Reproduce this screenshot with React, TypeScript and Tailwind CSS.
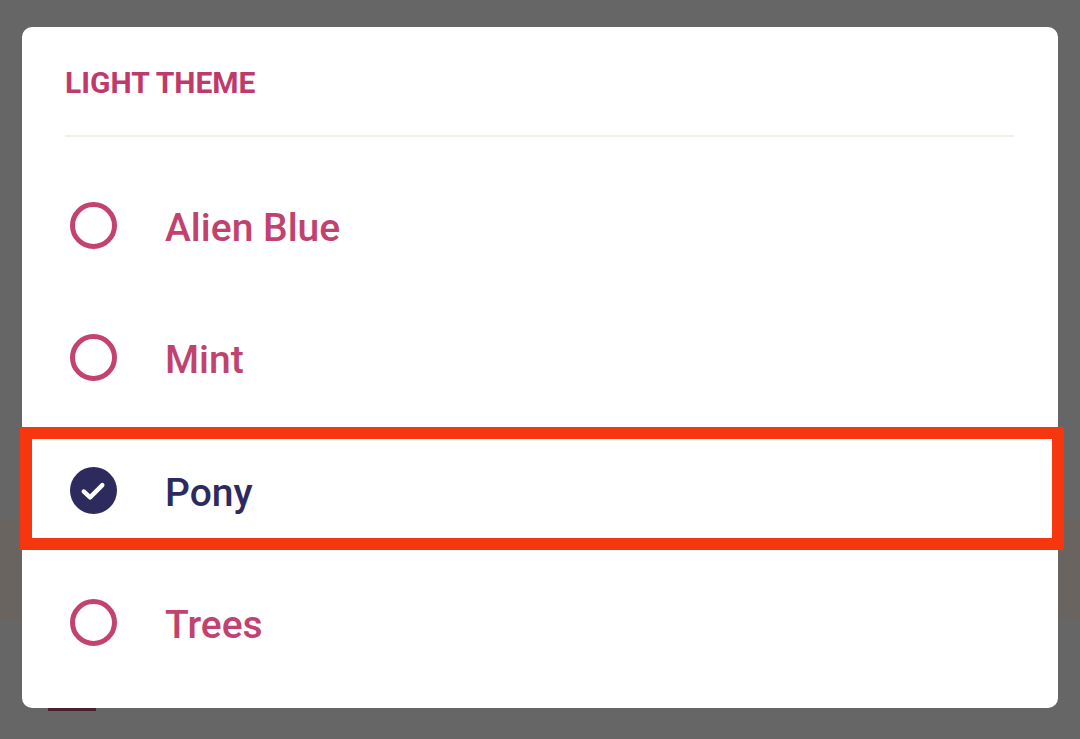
import React from "react";

const items = [
  { label: "Alien Blue", checked: false },
  { label: "Mint", checked: false },
  { label: "Pony", checked: true },
  { label: "Trees", checked: false },
];

function Radio({ checked }: { checked: boolean }) {
  if (checked) {
    return (
      <svg width="47" height="47" viewBox="0 0 48 48" className="shrink-0">
        <circle cx="24" cy="24" r="24" fill="#2d2b5e" />
        <path
          d="M14 25 L20.5 31 L33 18.5"
          fill="none"
          stroke="#ffffff"
          strokeWidth="4.5"
          strokeLinecap="round"
          strokeLinejoin="round"
        />
      </svg>
    );
  }
  return <div className="w-[47px] h-[47px] shrink-0 rounded-full border-[5px] border-[#c4426f]" />;
}

export default function App() {
  return (
    <div
      className="relative w-[1080px] h-[739px] overflow-hidden bg-[#666666]"
      style={{ fontFamily: "Roboto, 'Noto Sans', sans-serif" }}
    >
      <div className="absolute left-0 right-0 top-[520px] h-[100px] bg-[#69645f]" />
      <div className="absolute left-[48px] top-[706px] w-[48px] h-[5px] bg-[#4a2030]" />
      <div className="relative pt-[27px] px-[22px]">
        <div className="w-[1036px] h-[681px] bg-white rounded-[10px] flex flex-col">
          <div className="pt-[39px] pl-[43px] pr-[44px]">
            <div className="text-[30px] leading-[34px] font-bold text-[#c0396b]">
              LIGHT THEME
            </div>
            <div className="mt-[35px] h-[2px] bg-[#f3f0e2]" />
          </div>
          <div className="mt-[22px] flex flex-col">
            {items.map((it) => (
              <div key={it.label} className="h-[132.5px] flex items-center pl-[48px]">
                <Radio checked={it.checked} />
                <span
                  className={
                    "ml-[48px] pt-[6px] text-[39px] leading-none font-medium " +
                    (it.checked ? "text-[#2d2b5e]" : "text-[#c2426f]")
                  }
                >
                  {it.label}
                </span>
              </div>
            ))}
          </div>
        </div>
      </div>
      <div className="absolute left-[20px] top-[427px] w-[1044px] h-[123px] border-[12px] border-[#f6360e]" />
    </div>
  );
}
